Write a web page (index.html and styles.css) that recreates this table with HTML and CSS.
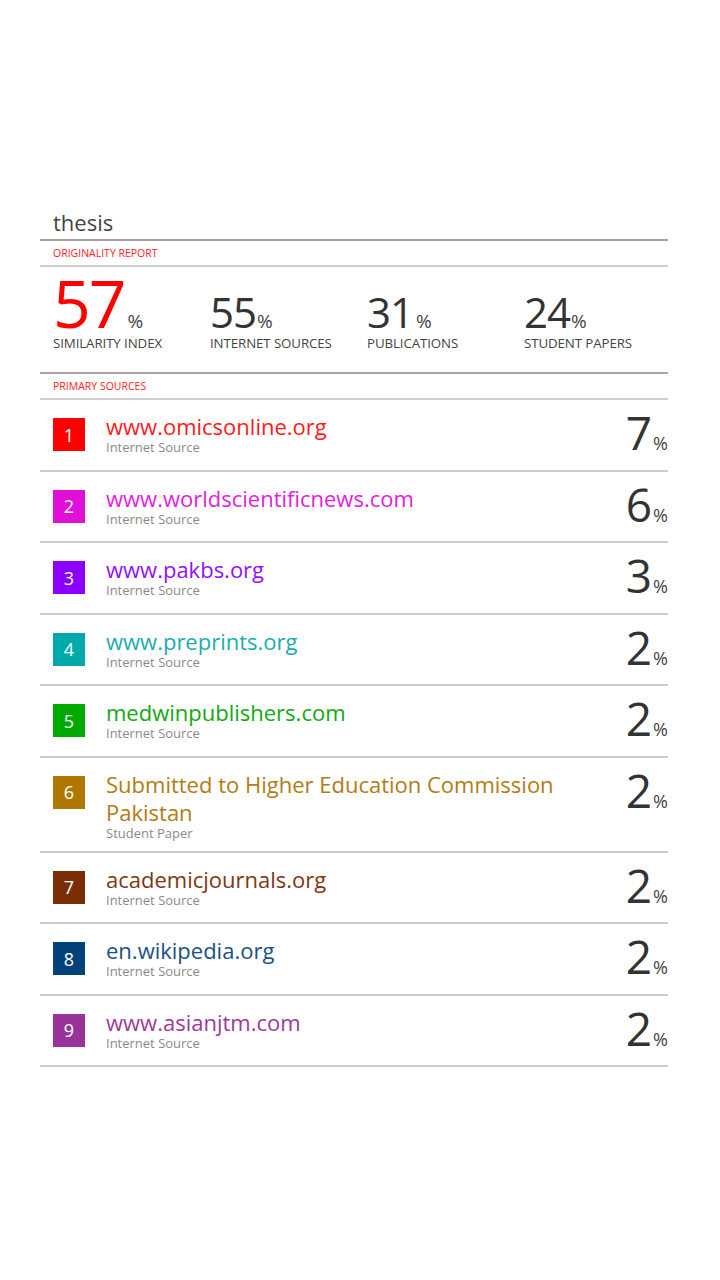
FILE: index.html
```html
<!DOCTYPE html>
<html>
<head>
<meta charset="utf-8">
<link rel="stylesheet" href="styles.css">
</head>
<body>
<div class="report">
  <h1 class="doc-title">thesis</h1>
  <div class="section-label">ORIGINALITY REPORT</div>
  <div class="stats">
    <div class="stat">
      <div class="stat-num"><span class="big red">57</span><span class="pct pct-gap">%</span></div>
      <div class="stat-label">SIMILARITY INDEX</div>
    </div>
    <div class="stat">
      <div class="stat-num"><span class="big">55</span><span class="pct">%</span></div>
      <div class="stat-label">INTERNET SOURCES</div>
    </div>
    <div class="stat">
      <div class="stat-num"><span class="big">31</span><span class="pct pct-gap">%</span></div>
      <div class="stat-label">PUBLICATIONS</div>
    </div>
    <div class="stat">
      <div class="stat-num"><span class="big">24</span><span class="pct">%</span></div>
      <div class="stat-label">STUDENT PAPERS</div>
    </div>
  </div>
  <div class="section-label section-label-dark">PRIMARY SOURCES</div>
  <ul class="sources">
    <li class="source c1">
      <span class="badge">1</span>
      <div class="info"><div class="name">www.omicsonline.org</div><div class="kind">Internet Source</div></div>
      <div class="share"><span class="share-num">7</span><span class="share-pct">%</span></div>
    </li>
    <li class="source c2">
      <span class="badge">2</span>
      <div class="info"><div class="name">www.worldscientificnews.com</div><div class="kind">Internet Source</div></div>
      <div class="share"><span class="share-num">6</span><span class="share-pct">%</span></div>
    </li>
    <li class="source c3">
      <span class="badge">3</span>
      <div class="info"><div class="name">www.pakbs.org</div><div class="kind">Internet Source</div></div>
      <div class="share"><span class="share-num">3</span><span class="share-pct">%</span></div>
    </li>
    <li class="source c4">
      <span class="badge">4</span>
      <div class="info"><div class="name">www.preprints.org</div><div class="kind">Internet Source</div></div>
      <div class="share"><span class="share-num">2</span><span class="share-pct">%</span></div>
    </li>
    <li class="source c5">
      <span class="badge">5</span>
      <div class="info"><div class="name">medwinpublishers.com</div><div class="kind">Internet Source</div></div>
      <div class="share"><span class="share-num">2</span><span class="share-pct">%</span></div>
    </li>
    <li class="source c6">
      <span class="badge">6</span>
      <div class="info"><div class="name">Submitted to Higher Education Commission Pakistan</div><div class="kind">Student Paper</div></div>
      <div class="share"><span class="share-num">2</span><span class="share-pct">%</span></div>
    </li>
    <li class="source c7">
      <span class="badge">7</span>
      <div class="info"><div class="name">academicjournals.org</div><div class="kind">Internet Source</div></div>
      <div class="share"><span class="share-num">2</span><span class="share-pct">%</span></div>
    </li>
    <li class="source c8">
      <span class="badge">8</span>
      <div class="info"><div class="name">en.wikipedia.org</div><div class="kind">Internet Source</div></div>
      <div class="share"><span class="share-num">2</span><span class="share-pct">%</span></div>
    </li>
    <li class="source c9">
      <span class="badge">9</span>
      <div class="info"><div class="name">www.asianjtm.com</div><div class="kind">Internet Source</div></div>
      <div class="share"><span class="share-num">2</span><span class="share-pct">%</span></div>
    </li>
  </ul>
</div>
</body>
</html>
```

FILE: styles.css
```css
* { box-sizing: border-box; }
html, body { margin: 0; padding: 0; background: #fff; }
body { font-family: "Open Sans", "Noto Sans", sans-serif; color: #333; }

.report { margin: 207px 52px 0 40px; }

.doc-title {
  margin: 0;
  padding: 0 13px 2px;
  font-size: 22px;
  line-height: 30px;
  font-weight: 400;
  color: #444;
  border-bottom: 2px solid #a3a3a3;
}

.section-label {
  padding: 0 13px;
  font-size: 10.5px;
  line-height: 24px;
  color: #ff2222;
  border-bottom: 2px solid #cfcfcf;
}

.stats {
  display: grid;
  grid-template-columns: repeat(4, 157px);
  padding: 2px 13px 21px;
  border-bottom: 2px solid #a8a8a8;
}
.stat-num {
  height: 66px;
  font-size: 66px;
  line-height: 66px;
  white-space: nowrap;
}
.big {
  font-size: 42px;
  line-height: 1;
  color: #333;
  letter-spacing: -1px;
}
.big.red { font-size: 66px; color: #ff0000; letter-spacing: -2px; }
.pct { font-size: 19px; line-height: 1; color: #444; margin-left: 1px; }
.pct-gap { margin-left: 3px; }
.stat-label {
  font-size: 13.3px;
  line-height: 16px;
  color: #444;
  letter-spacing: -0.1px;
  white-space: nowrap;
}

.sources { list-style: none; margin: 0; padding: 0; }
.source {
  display: flex;
  align-items: flex-start;
  min-height: 71.5px;
  padding: 12px 0 11px 13px;
  border-bottom: 2px solid #cccccc;
}
.badge {
  flex: none;
  width: 32px;
  height: 33px;
  margin-top: 6px;
  display: flex;
  align-items: center;
  justify-content: center;
  color: #fff;
  font-size: 18px;
}
.info { flex: 1; margin-left: 21px; padding-right: 40px; }
.name { font-size: 22px; line-height: 28px; }
.kind { font-size: 13px; line-height: 14px; color: #8a8a8a; }
.share { flex: none; display: flex; align-items: baseline; }
.share-num { font-size: 46px; line-height: 40px; color: #333; }
.share-pct { font-size: 18px; color: #444; margin-left: 1px; }

.c1 .badge { background: #ff0000; } .c1 .name { color: #ff1a1a; }
.c2 .badge { background: #e010d8; } .c2 .name { color: #e41ddc; }
.c3 .badge { background: #8c00ff; } .c3 .name { color: #9012ff; }
.c4 .badge { background: #00aaaa; } .c4 .name { color: #1aadad; }
.c5 .badge { background: #00aa00; } .c5 .name { color: #12a812; }
.c6 .badge { background: #b07800; } .c6 .name { color: #b17c14; }
.c7 .badge { background: #7a2e05; } .c7 .name { color: #7f3712; }
.c8 .badge { background: #00427a; } .c8 .name { color: #1a5283; }
.c9 .badge { background: #993399; } .c9 .name { color: #9c3a9c; }
```
